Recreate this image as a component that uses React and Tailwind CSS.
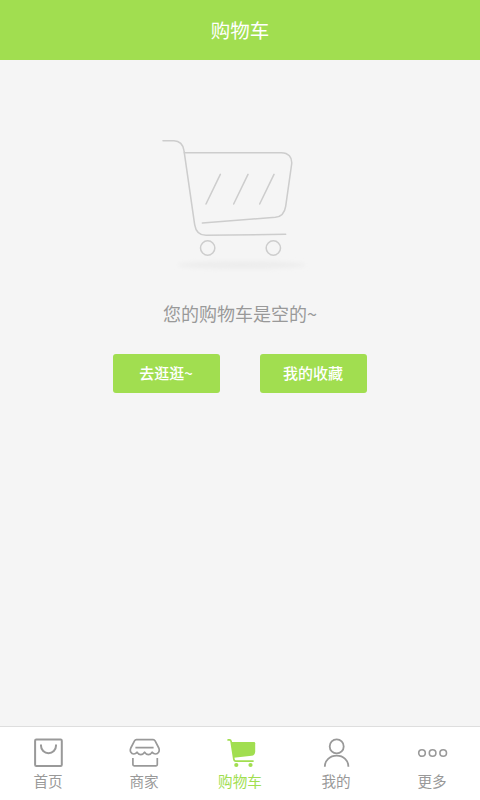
import React from 'react';

// 空购物车插图
function EmptyCartArt() {
  return (
    <svg
      className="w-[170px] h-[150px]"
      viewBox="0 0 510 450"
      fill="none"
      stroke="#cdcdcd"
      strokeWidth={4.6}
      strokeLinecap="round"
      strokeLinejoin="round"
      aria-hidden="true"
    >
      <defs>
        <filter id="cart-shadow" x="-10%" y="-80%" width="120%" height="260%">
          <feGaussianBlur stdDeviation="6" />
        </filter>
      </defs>
      <ellipse cx="275" cy="405" rx="192" ry="12" fill="#ededed" stroke="none" filter="url(#cart-shadow)" />
      <path d="M39 32h33c16 0 28 12 30 30l32 222c3 20 15 32 34 32l239-3" />
      <path d="M103 68h291c21 0 33 14 31 34l-18 127c-3 20-13 31-31 33l-219 17" />
      <path d="M211 133l-43 89M294 133l-43 89M372 133l-43 89" />
      <circle cx="173" cy="354" r="21.5" />
      <circle cx="370" cy="354" r="21.5" />
    </svg>
  );
}

function NavIcon({ children }) {
  return (
    <svg
      className="w-8 h-8"
      viewBox="0 0 32 32"
      fill="none"
      stroke="currentColor"
      strokeWidth={2}
      strokeLinecap="round"
      strokeLinejoin="round"
      aria-hidden="true"
    >
      {children}
    </svg>
  );
}

const tabs = [
  {
    label: '首页',
    icon: (
      <>
        <rect x="3.1" y="2.5" width="26.7" height="26.4" rx="1.2" />
        <path d="M9 7.400v1.300a7.500 7.500 0 0 0 15 0v-1.300" strokeLinecap="butt" />
      </>
    ),
  },
  {
    label: '商家',
    icon: (
      <g strokeWidth={1.7}>
        <path d="M8.4 2.7h16.8q1.2 0 1.900 1.200l3.700 7.100c1.300 3.100-.5 6-3.200 6-1.500 0-2.600-.7-3.400-1.800-1.800 3.200-5.800 3.200-7.600 0-1.800 3.200-5.800 3.200-7.600 0-.8 1.100-1.900 1.800-3.200 1.800-2.700 0-4.300-2.900-3-6l3.700-7.100q.7-1.200 1.900-1.200z" />
        <path d="M7.400 10.700h18.200M4.900 21v6.600q0 1.200 1.200 1.200h22q1.200 0 1.200-1.200V21" strokeLinecap="butt" />
      </g>
    ),
  },
  {
    label: '购物车',
    active: true,
    icon: (
      <>
        <path d="M7 5h23q1.200 0 1.200 1.200v8.200q-.2 3.900-3.600 4.300L9.600 20.800z" fill="currentColor" stroke="none" />
        <path d="M4.100 2.900h1.400q1.300 0 1.600 1.500l2.700 17.400q.3 2.300 2 2.300h17.200" strokeWidth={1.700} />
        <circle cx="12.300" cy="28" r="2.100" fill="currentColor" stroke="none" />
        <circle cx="26.500" cy="28" r="2.100" fill="currentColor" stroke="none" />
      </>
    ),
  },
  {
    label: '我的',
    icon: (
      <g strokeWidth={1.800} strokeLinecap="butt">
        <circle cx="16.700" cy="9.400" r="7" />
        <path d="M4.800 29.700c0-6.300 5-11.100 11.900-11.100s11.700 4.800 11.700 11.100" />
      </g>
    ),
  },
  {
    label: '更多',
    icon: (
      <g strokeWidth={1.600}>
        <circle cx="6" cy="16" r="3.300" />
        <circle cx="16.600" cy="16" r="3.300" />
        <circle cx="27.200" cy="16" r="3.300" />
      </g>
    ),
  },
];

export default function App() {
  return (
    <div className="flex h-screen w-full flex-col bg-[#f5f5f5] font-['Noto_Sans_CJK_SC',sans-serif]">
      {/* 顶部标题栏 */}
      <header className="flex h-[60px] shrink-0 items-center justify-center bg-[#a1de50]">
        <h1 className="text-[19.5px] leading-7 text-white">购物车</h1>
      </header>

      {/* 空购物车提示 */}
      <main className="flex flex-1 flex-col items-center pt-[70px]">
        <div className="pr-2.5">
          <EmptyCartArt />
        </div>
        <p className="mt-[21px] text-[18px] leading-6 text-[#999]">您的购物车是空的~</p>
        <div className="mt-[29px] flex gap-10 pr-px">
          <button className="h-[39px] w-[107px] rounded-[3px] bg-[#a1de50] text-[15px] font-medium text-white">
            去逛逛~
          </button>
          <button className="h-[39px] w-[107px] rounded-[3px] bg-[#a1de50] text-[15px] font-medium text-white">
            我的收藏
          </button>
        </div>
      </main>

      {/* 底部导航 */}
      <nav className="flex h-[74px] shrink-0 border-t border-[#dedede] bg-white">
        {tabs.map((tab) => (
          <a
            key={tab.label}
            className={`flex flex-1 flex-col items-center pt-2.5 ${tab.active ? 'text-[#a1de50]' : 'text-[#999]'}`}
          >
            <NavIcon>{tab.icon}</NavIcon>
            <span className="mt-0.5 text-[14.6px] leading-5">{tab.label}</span>
          </a>
        ))}
      </nav>
    </div>
  );
}
